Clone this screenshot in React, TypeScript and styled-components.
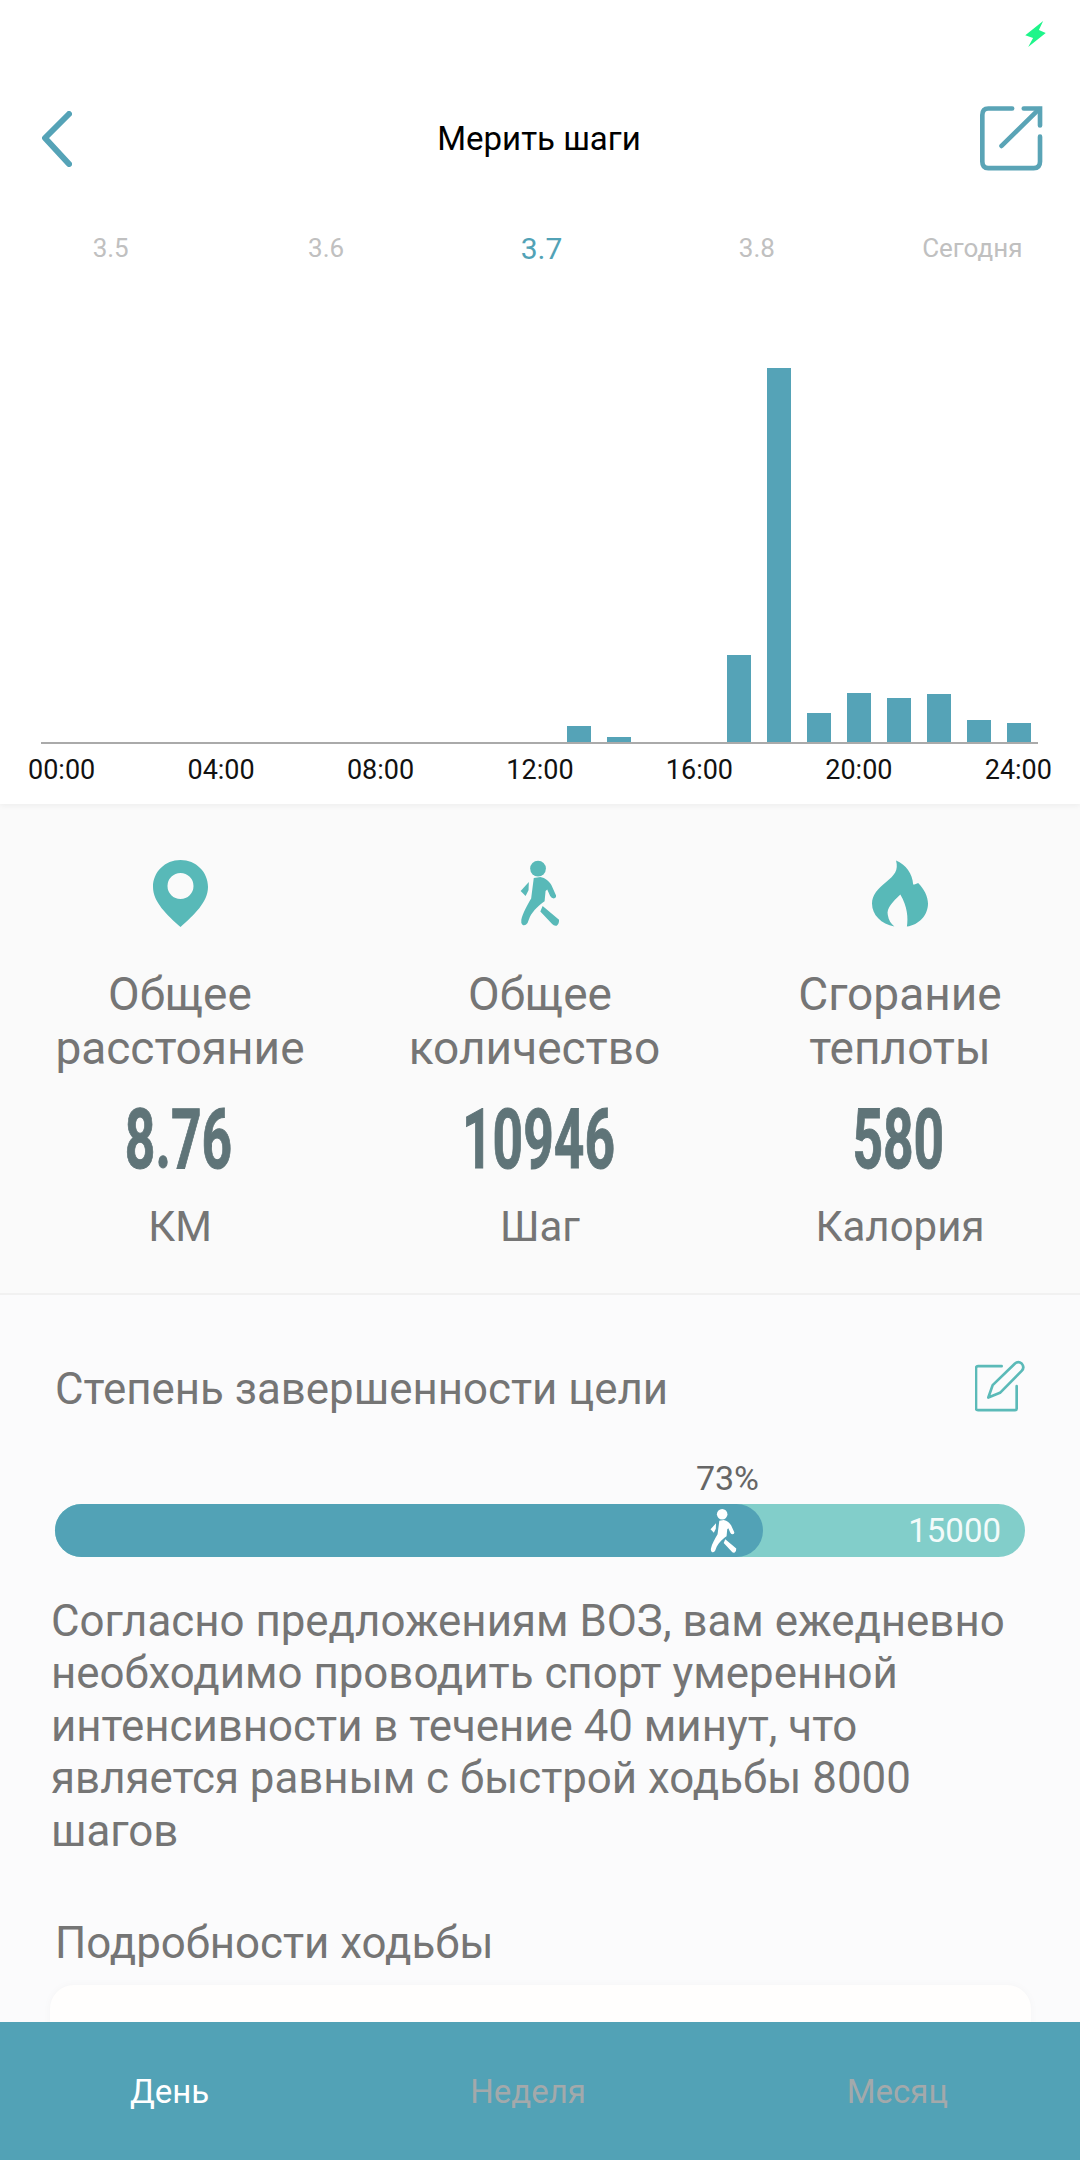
import styled, { createGlobalStyle } from "styled-components";

const GlobalStyle = createGlobalStyle`
  html, body {
    margin: 0;
    padding: 0;
    background: #fafafa;
    font-family: Roboto, "Liberation Sans", sans-serif;
  }
`;

const Page = styled.div`
  position: relative;
  width: 1080px;
  height: 2160px;
  overflow: hidden;
  background: #fbfbfc;
`;

const Header = styled.header`
  background: #fff;
  height: 804px;
  box-shadow: 0 2px 6px rgba(0, 0, 0, 0.05);
  position: relative;
`;

const StatusBar = styled.div`
  display: flex;
  justify-content: flex-end;
  height: 60px;
  padding: 21px 34px 0 0;
  box-sizing: border-box;
`;

const TopBar = styled.div`
  display: grid;
  grid-template-columns: 1fr auto 1fr;
  align-items: center;
  height: 65px;
  margin-top: 46px;
  padding: 0 39px 0 37px;
`;

const BackButton = styled.div`
  display: flex;
  margin-left: 5px;
`;

const Title = styled.h1`
  margin: 0;
  font-size: 33px;
  font-weight: 400;
  color: #000;
`;

const ShareButton = styled.div`
  display: flex;
  justify-content: flex-end;
  margin-right: -2px;
`;

const DateRow = styled.div`
  display: grid;
  grid-template-columns: repeat(5, 1fr);
  align-items: center;
  height: 50px;
  margin-top: 52px;
  padding-left: 3px;
`;

const DateItem = styled.span<{ $active?: boolean }>`
  text-align: center;
  font-size: ${(p) => (p.$active ? "30px" : "26px")};
  color: ${(p) => (p.$active ? "#52a2b6" : "#c0c0c0")};
`;

const Chart = styled.div`
  display: flex;
  align-items: flex-end;
  gap: 16px;
  height: 469px;
  margin: 0 42px 0 41px;
  padding-left: 6px;
  border-bottom: 2px solid #aaa;
`;

const Bar = styled.div`
  flex: 0 0 24px;
  background: #55a3b7;
`;

const Axis = styled.div`
  display: flex;
  justify-content: space-between;
  margin-top: 11px;
  padding: 0 28px 0 28px;
  font-size: 27px;
  line-height: 30px;
  color: #111;
`;

const Stats = styled.section`
  display: grid;
  grid-template-columns: repeat(3, 1fr);
  padding: 56px 0 39px;
  background: #fafafa;
  border-bottom: 2px solid #f1f1f1;
`;

const Stat = styled.div`
  display: flex;
  flex-direction: column;
  align-items: center;
  text-align: center;
`;

const StatLabel = styled.div`
  margin-top: 40px;
  font-size: 46px;
  line-height: 54px;
  color: #757575;
`;

const LabelLine = styled.div<{ $pull?: number }>`
  padding-right: ${(p) => p.$pull ?? 0}px;
`;

const StatValue = styled.div`
  margin-top: 25px;
  margin-bottom: -3px;
  margin-right: 3px;
  font-size: 84px;
  font-weight: 700;
  line-height: 80px;
  color: #5f7478;
  transform: scaleX(0.635);
  -webkit-text-stroke: 1px #5f7478;
`;

const StatUnit = styled.div`
  margin-top: 23px;
  font-size: 42px;
  line-height: 54px;
  color: #757575;
`;

const GoalHead = styled.div`
  display: flex;
  align-items: center;
  justify-content: space-between;
  margin-top: 66px;
  padding: 0 55px;
  height: 50px;
`;

const SectionTitle = styled.h2`
  margin: 0;
  font-size: 43.85px;
  font-weight: 400;
  line-height: 54px;
  color: #757575;
`;

const GoalTitle = styled(SectionTitle)`
  padding-top: 5px;
`;

const Percent = styled.div`
  margin: 47px 0 0 55px;
  font-size: 34px;
  line-height: 40px;
  text-align: right;
  padding-right: 4px;
  color: #666;
`;

const Track = styled.div`
  display: flex;
  align-items: center;
  justify-content: space-between;
  height: 53px;
  margin: 6px 55px 0;
  padding-right: 24px;
  border-radius: 27px;
  background: #82ceca;
`;

const Fill = styled.div`
  display: flex;
  align-items: center;
  justify-content: flex-end;
  height: 100%;
  padding-right: 26px;
  box-sizing: border-box;
  border-radius: 27px;
  background: #52a2b6;
`;

const TrackGoal = styled.span`
  font-size: 33px;
  color: #f4fbfa;
`;

const Note = styled.p`
  margin: 38px 40px 0 51px;
  font-size: 43.85px;
  line-height: 52.4px;
  color: #757575;
`;

const DetailsTitle = styled(SectionTitle)`
  margin: 59px 0 0 55px;
`;

const DetailsCard = styled.div`
  height: 200px;
  margin: 15px 49px 0 50px;
  border-radius: 24px;
  background: #fffefd;
  box-shadow: 0 0 8px rgba(0, 0, 0, 0.03);
`;

const BottomNav = styled.nav`
  position: absolute;
  left: 0;
  right: 0;
  bottom: 0;
  display: flex;
  align-items: center;
  justify-content: space-between;
  height: 138px;
  padding: 0 132px 0 130px;
  box-sizing: border-box;
  background: #52a2b6;
`;

const NavItem = styled.span<{ $active?: boolean }>`
  font-size: 33px;
  color: ${(p) => (p.$active ? "#fff" : "#a3a9ab")};
`;

const Bolt = () => (
  <svg width="21" height="26" viewBox="195 62 63 80">
    <path d="M250 62 L195 106 L219 114 L204 142 L258 99 L237 90 Z" fill="#1ef58a" />
  </svg>
);

const BackIcon = () => (
  <svg width="30" height="56" viewBox="0 0 30 56" fill="none">
    <path d="M27 3 L3 27 L27 53" stroke="#55a3b7" strokeWidth="6" strokeLinecap="round" strokeLinejoin="round" />
  </svg>
);

const ShareIcon = () => (
  <svg width="63" height="65" viewBox="60 318 190 195" fill="none" stroke="#5aa4b6" strokeWidth="14" strokeLinecap="round">
    <path d="M157 325 H85 Q67 325 67 345 V485 Q67 505 85 505 H222 Q241 505 241 485 V410" />
    <path d="M125 438 L238 327" />
    <path d="M192 325 H241 V376" />
  </svg>
);

const PinIcon = () => (
  <svg width="55" height="67" viewBox="0 0 55 67">
    <path
      fillRule="evenodd"
      fill="#58b9b8"
      d="M27.5 0 C12 0 0 12 0 27 C0 42 14 55 27.5 67 C41 55 55 42 55 27 C55 12 43 0 27.5 0Z M27.5 13 A13 13 0 1 1 27.5 39 A13 13 0 1 1 27.5 13Z"
    />
  </svg>
);

const WalkerIcon = ({ color, width, height }: { color: string; width: number; height: number }) => (
  <svg width={width} height={height} viewBox="88 60 122 200" fill={color}>
    <circle cx="143" cy="84" r="24" />
    <path d="M130 113 L150 110 C165 112 178 124 184 135 L198 166 Q199 173 191 175 Q184 175 180 168 L171 148 L166 152 L163 184 C150 192 128 212 118 232 L111 250 Q104 260 96 256 Q90 250 92 240 C96 220 110 195 122 175 Z" />
    <path d="M115 125 L90 152 L105 168 L114 150 Z" />
    <path d="M157 198 L207 240 Q208 252 200 258 Q192 260 186 253 L150 215 Z" />
  </svg>
);

const FlameIcon = () => (
  <svg width="56" height="67" viewBox="62 60 170 200">
    <path
      fill="#58b9b8"
      d="M135 60 C165 72 185 100 187 133 C192 133 198 130 202 128 C220 145 232 170 232 190 C232 225 205 255 168 260 C172 235 170 200 148 163 C125 185 105 205 110 225 C112 240 120 252 130 260 C90 252 62 225 62 190 C62 165 80 145 105 125 C130 105 143 90 135 60Z"
    />
  </svg>
);

const EditIcon = () => (
  <svg width="50" height="52" viewBox="75 60 150 155" fill="none" stroke="#5bbab8" strokeWidth="8" strokeLinecap="round" strokeLinejoin="round">
    <path d="M155 78 H84 Q78 78 78 84 V205 Q78 210 84 210 H195 Q200 210 200 205 V138" />
    <path d="M115 172 L128 135 L195 70 Q205 62 215 70 Q225 82 215 92 L150 158 Z" />
  </svg>
);

const dates = ["3.5", "3.6", "3.7", "3.8", "Сегодня"];
const axisLabels = ["00:00", "04:00", "08:00", "12:00", "16:00", "20:00", "24:00"];

// height of every bar by hour, 0..24
const hours = [0, 0, 0, 0, 0, 0, 0, 0, 0, 0, 0, 0, 0, 16, 5, 0, 0, 87, 374, 29, 49, 44, 48, 22, 19];

const stats = [
  { icon: <PinIcon />, label: ["Общее", "расстояние"], pull: 0, value: "8.76", unit: "КМ" },
  {
    icon: <WalkerIcon color="#58b9b8" width={40} height={67} />,
    label: ["Общее", "количество"],
    pull: 11,
    value: "10946",
    unit: "Шаг",
  },
  { icon: <FlameIcon />, label: ["Сгорание", "теплоты"], pull: 0, value: "580", unit: "Калория" },
];

export default function App() {
  return (
    <Page>
      <GlobalStyle />
      <Header>
        <StatusBar>
          <Bolt />
        </StatusBar>
        <TopBar>
          <BackButton>
            <BackIcon />
          </BackButton>
          <Title>Мерить шаги</Title>
          <ShareButton>
            <ShareIcon />
          </ShareButton>
        </TopBar>
        <DateRow>
          {dates.map((d) => (
            <DateItem key={d} $active={d === "3.7"}>
              {d}
            </DateItem>
          ))}
        </DateRow>
        <Chart>
          {hours.map((h, i) => (
            <Bar key={i} style={{ height: h }} />
          ))}
        </Chart>
        <Axis>
          {axisLabels.map((t) => (
            <span key={t}>{t}</span>
          ))}
        </Axis>
      </Header>

      <Stats>
        {stats.map((s) => (
          <Stat key={s.value}>
            {s.icon}
            <StatLabel>
              <LabelLine>{s.label[0]}</LabelLine>
              <LabelLine $pull={s.pull}>{s.label[1]}</LabelLine>
            </StatLabel>
            <StatValue>{s.value}</StatValue>
            <StatUnit>{s.unit}</StatUnit>
          </Stat>
        ))}
      </Stats>

      <GoalHead>
        <GoalTitle>Степень завершенности цели</GoalTitle>
        <EditIcon />
      </GoalHead>
      <Percent style={{ width: 704 }}>73%</Percent>
      <Track>
        <Fill style={{ width: 708 }}>
          <WalkerIcon color="#fff" width={27} height={44} />
        </Fill>
        <TrackGoal>15000</TrackGoal>
      </Track>
      <Note>
        Согласно предложениям ВОЗ, вам ежедневно необходимо проводить спорт умеренной интенсивности в течение 40 минут,
        что является равным с быстрой ходьбы 8000 шагов
      </Note>
      <DetailsTitle>Подробности ходьбы</DetailsTitle>
      <DetailsCard />

      <BottomNav>
        <NavItem $active>День</NavItem>
        <NavItem>Неделя</NavItem>
        <NavItem>Месяц</NavItem>
      </BottomNav>
    </Page>
  );
}
